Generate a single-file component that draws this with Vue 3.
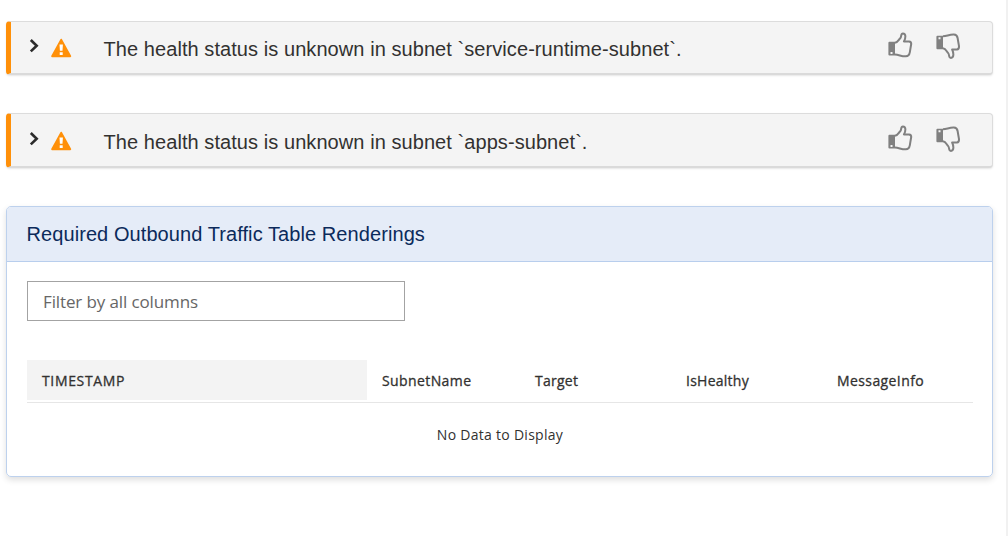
<script setup>
const alerts = [
  { id: 'first', subnet: 'service-runtime-subnet' },
  { id: 'second', subnet: 'apps-subnet' },
]
const columns = [
  { key: 'time', label: 'TIMESTAMP' },
  { key: 'subnet', label: 'SubnetName' },
  { key: 'target', label: 'Target' },
  { key: 'healthy', label: 'IsHealthy' },
  { key: 'info', label: 'MessageInfo' },
]
</script>

<template>
  <main class="page">
    <section v-for="a in alerts" :key="a.id" class="alert" :class="a.id">
      <svg class="chevron" width="12" height="16" viewBox="0 0 12 16">
        <path d="M2.8 2 L8.7 7.7 L2.8 13.4" fill="none" stroke="#2b2b2b" stroke-width="2.6" />
      </svg>
      <svg class="warning" width="21" height="20" viewBox="0 0 21 20">
        <path d="M10.2 1.6 L19.3 18.3 H1.1 Z" fill="#ff9009" stroke="#ff9009" stroke-width="1.8" stroke-linejoin="round" />
        <path d="M8.5 6.5 H11.9 L11.5 12.8 H8.9 Z M8.7 14.2 H11.7 V16.9 H8.7 Z" fill="#fff" />
      </svg>
      <span class="message">The health status is unknown in subnet `{{ a.subnet }}`.</span>
      <div class="votes">
        <svg width="26" height="28" viewBox="0 0 26 28">
          <path fill-rule="evenodd" fill="#808080" d="M2.4 10.8 H8 V24.5 H2.4 Q1.4 24.5 1.4 23.5 V11.8 Q1.4 10.8 2.4 10.8 Z M3.5 21 V23 H5.5 V21 Z" />
          <path d="M8 11.8 C11 11.3 11.5 8.8 13.4 7 C14.6 5.7 13.6 2.4 15.9 2.4 C19.4 2.4 18.7 7.3 16.9 10.4 H22 Q24.4 10.6 24.2 13 L22.8 21.4 Q22.1 25.2 18.9 25.3 C14.4 25.5 12 23.7 8 23.6" fill="none" stroke="#808080" stroke-width="2" stroke-linejoin="round" />
        </svg>
        <svg width="26" height="28" viewBox="0 0 26 28">
          <path fill-rule="evenodd" fill="#808080" d="M2.4 4.8 H8 V18.3 H2.4 Q1.4 18.3 1.4 17.3 V5.8 Q1.4 4.8 2.4 4.8 Z M3.5 6.3 V8.3 H5.5 V6.3 Z" />
          <path d="M8 5.3 C12 5.1 14.4 3.4 18.9 3.6 Q22.1 3.7 22.6 7 L24 15.2 Q24.2 18.2 21.9 18.5 H17.1 C18.7 21.5 19.3 26.7 15.9 26.9 C13.4 27 14.6 23.5 13.2 22.1 C11.4 20.3 11 17.7 8 17.3" fill="none" stroke="#808080" stroke-width="2" stroke-linejoin="round" />
        </svg>
      </div>
    </section>

    <section class="panel">
      <h2>Required Outbound Traffic Table Renderings</h2>
      <div class="body">
        <input class="filter" type="text" placeholder="Filter by all columns" />
        <div class="header">
          <div v-for="c in columns" :key="c.key" class="cell" :class="c.key"><span>{{ c.label }}</span></div>
        </div>
        <div class="empty">No Data to Display</div>
      </div>
    </section>
  </main>
</template>

<style>
body {
  margin: 0;
  background: #fff;
}
</style>

<style scoped>
* {
  box-sizing: border-box;
}
.page {
  height: 536px;
  padding: 21px 13px 0 6px;
  border-right: 2px solid #f1f1f1;
  font-family: "Liberation Sans", Arial, sans-serif;
  color: #323130;
  overflow: hidden;
}
.alert {
  display: flex;
  height: 54px;
  border: 1px solid #dcdcdc;
  border-left: 5px solid #ff9009;
  border-bottom: 2px solid #dadada;
  border-radius: 4px;
  background: #f4f4f4;
  box-shadow: 0 1px 2px rgba(0, 0, 0, 0.1);
}
.first {
  margin-bottom: 38px;
}
.second {
  height: 55px;
  margin-bottom: 38px;
  padding-top: 1px;
}
.chevron {
  flex: none;
  margin: 16px 0 0 17px;
}
.warning {
  flex: none;
  margin: 16px 0 0 11px;
}
.message {
  margin: 15px 0 0 31.5px;
  font-size: 20px;
  line-height: 24px;
  letter-spacing: 0.07px;
  white-space: nowrap;
}
.votes {
  display: flex;
  gap: 22px;
  margin: 9px 31px 0 auto;
}
.panel {
  height: 271px;
  border: 1px solid #bdd1ed;
  border-radius: 5px;
  box-shadow: 0 3px 6px rgba(0, 0, 0, 0.13);
  overflow: hidden;
}
h2 {
  height: 55px;
  margin: 0;
  padding: 0 0 0 19.5px;
  border-bottom: 1px solid #b8ceed;
  background: #e5ecf8;
  color: #0b2a5b;
  font-size: 20px;
  font-weight: 400;
  letter-spacing: 0.08px;
  line-height: 54px;
}
.body {
  padding: 19px 19px 0 20px;
  font-family: "Open Sans", sans-serif;
}
.filter {
  display: block;
  width: 378px;
  height: 40px;
  padding: 0 15px;
  border: 1px solid #a3a3a3;
  border-radius: 0;
  background: #fff;
  font-family: "Open Sans", sans-serif;
  font-size: 17px;
  letter-spacing: -0.12px;
}
.filter::placeholder {
  color: #666;
  opacity: 1;
}
.header {
  display: grid;
  grid-template-columns: 340px 153px 151px 151px 1fr;
  height: 43px;
  margin-top: 39px;
  border-bottom: 1px solid #e6e6e6;
}
.cell {
  height: 40px;
  padding-left: 15px;
  font-size: 14px;
  letter-spacing: 0.4px;
  line-height: 41px;
  -webkit-text-stroke: 0.3px #323130;
}
.target,
.healthy {
  letter-spacing: 0.25px;
}
.time {
  letter-spacing: 0.65px;
  background: #f3f3f3;
}
.empty {
  margin-top: 22px;
  font-size: 14px;
  letter-spacing: 0.28px;
  line-height: 20px;
  text-align: center;
}
</style>
